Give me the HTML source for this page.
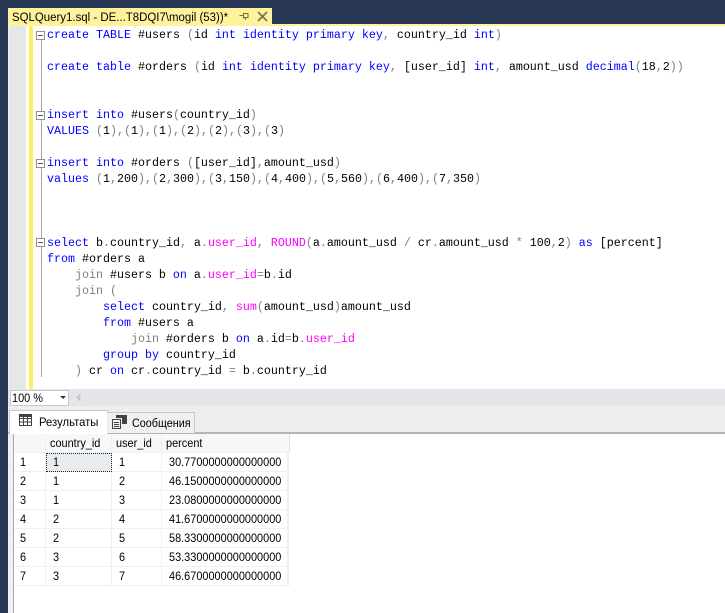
<!DOCTYPE html>
<html><head><meta charset="utf-8">
<style>
html,body{margin:0;padding:0;background:#fff}
#r{position:relative;width:725px;height:613px;overflow:hidden;background:#fff;font-family:"Liberation Sans",sans-serif}
.a{position:absolute}
.s{transform-origin:0 50%;transform:scaleX(.91)}
.l{position:absolute;left:47px;height:16px;line-height:16px;font-family:"Liberation Mono",monospace;font-size:11.67px;white-space:pre;color:#000;margin-top:1px}
.k{color:#0000ff}.g{color:#808080}.p{color:#ff00ff}
.f{position:absolute;left:36px;width:7px;height:7px;border:1px solid #8f8f8f;background:#fff}
.f:after{content:"";position:absolute;left:1px;top:3px;width:5px;height:1px;background:#555}
.c{position:absolute;font-size:12px;line-height:19px;height:19px;color:#000;white-space:pre;margin-top:1px;transform-origin:0 50%;transform:scaleX(.91)}
.hl{position:absolute;background:#f0f0f0}
</style></head><body><div id="r">
<div class="a" style="left:0;top:0;width:725px;height:24px;background:#293955"></div>
<div class="a" style="left:0;top:0;width:8px;height:613px;background:#293955"></div>
<div class="a" style="left:8px;top:8px;width:264px;height:17px;background:#fff29d"></div>
<div class="a" style="left:8px;top:24px;width:717px;height:2px;background:#fff29d"></div>
<div class="a" style="left:12px;top:8px;font-size:12.3px;line-height:18px;color:#000;white-space:pre;transform-origin:0 50%;transform:scaleX(.93)">SQLQuery1.sql - DE...T8DQI7\mogil (53))*</div>
<svg class="a" style="left:238px;top:10px" width="30" height="12" viewBox="0 0 30 12"><path d="M1.5 5.5H5M5.500 3V8.500M5.500 3.500H10V7.500H5.500M7.500 7.500V10" fill="none" stroke="#7a6a3a" stroke-width="1"/><path d="M20 2L29 11M29 2L20 11" stroke="#7d7358" stroke-width="1.800" fill="none"/></svg>

<div class="a" style="left:8px;top:26px;width:1px;height:363px;background:#f0f0f0"></div>
<div class="a" style="left:9px;top:26px;width:17px;height:363px;background:#e6e7e8"></div>
<div class="a" style="left:29px;top:26px;width:4px;height:363px;background:#ffee62"></div>
<div class="a" style="left:41px;top:36px;width:1px;height:341px;background:#a5a5a5"></div>
<div class="f" style="top:31px"></div>
<div class="f" style="top:111px"></div>
<div class="f" style="top:159px"></div>
<div class="f" style="top:238px"></div>

<div class="l" style="top:26px"><span class="k">create</span> <span class="k">TABLE</span> #users <span class="g">(</span>id <span class="k">int</span> <span class="k">identity</span> <span class="k">primary</span> <span class="k">key</span><span class="g">,</span> country_id <span class="k">int</span><span class="g">)</span></div>
<div class="l" style="top:58px"><span class="k">create</span> <span class="k">table</span> #orders <span class="g">(</span>id <span class="k">int</span> <span class="k">identity</span> <span class="k">primary</span> <span class="k">key</span><span class="g">,</span> [user_id] <span class="k">int</span><span class="g">,</span> amount_usd <span class="k">decimal</span><span class="g">(</span>18<span class="g">,</span>2<span class="g">))</span></div>
<div class="l" style="top:106px"><span class="k">insert</span> <span class="k">into</span> #users<span class="g">(</span>country_id<span class="g">)</span></div>
<div class="l" style="top:122px"><span class="k">VALUES</span> <span class="g">(</span>1<span class="g">),(</span>1<span class="g">),(</span>1<span class="g">),(</span>2<span class="g">),(</span>2<span class="g">),(</span>3<span class="g">),(</span>3<span class="g">)</span></div>
<div class="l" style="top:154px"><span class="k">insert</span> <span class="k">into</span> #orders <span class="g">(</span>[user_id]<span class="g">,</span>amount_usd<span class="g">)</span></div>
<div class="l" style="top:170px"><span class="k">values</span> <span class="g">(</span>1<span class="g">,</span>200<span class="g">),(</span>2<span class="g">,</span>300<span class="g">),(</span>3<span class="g">,</span>150<span class="g">),(</span>4<span class="g">,</span>400<span class="g">),(</span>5<span class="g">,</span>560<span class="g">),(</span>6<span class="g">,</span>400<span class="g">),(</span>7<span class="g">,</span>350<span class="g">)</span></div>
<div class="l" style="top:234px"><span class="k">select</span> b<span class="g">.</span>country_id<span class="g">,</span> a<span class="g">.</span><span class="p">user_id</span><span class="g">,</span> <span class="p">ROUND</span><span class="g">(</span>a<span class="g">.</span>amount_usd <span class="g">/</span> cr<span class="g">.</span>amount_usd <span class="g">*</span> 100<span class="g">,</span>2<span class="g">)</span> <span class="k">as</span> [percent]</div>
<div class="l" style="top:250px"><span class="k">from</span> #orders a</div>
<div class="l" style="top:266px">    <span class="g">join</span> #users b <span class="k">on</span> a<span class="g">.</span><span class="p">user_id</span><span class="g">=</span>b<span class="g">.</span>id</div>
<div class="l" style="top:282px">    <span class="g">join</span> <span class="g">(</span></div>
<div class="l" style="top:298px">        <span class="k">select</span> country_id<span class="g">,</span> <span class="p">sum</span><span class="g">(</span>amount_usd<span class="g">)</span>amount_usd</div>
<div class="l" style="top:314px">        <span class="k">from</span> #users a</div>
<div class="l" style="top:330px">            <span class="g">join</span> #orders b <span class="k">on</span> a<span class="g">.</span>id<span class="g">=</span>b<span class="g">.</span><span class="p">user_id</span></div>
<div class="l" style="top:346px">        <span class="k">group</span> <span class="k">by</span> country_id</div>
<div class="l" style="top:362px">    <span class="g">)</span> cr <span class="k">on</span> cr<span class="g">.</span>country_id <span class="g">=</span> b<span class="g">.</span>country_id</div>

<div class="a" style="left:8px;top:389px;width:717px;height:17px;background:#e6e6ea"></div>
<div class="a" style="left:10px;top:390px;width:57px;height:14px;background:#fff;border:1px solid #c4c8d0"></div>
<div class="a s" style="left:12px;top:390px;font-size:12px;line-height:16px;color:#000;white-space:pre">100 %</div>
<svg class="a" style="left:59px;top:395px" width="8" height="5"><path d="M1 1H7L4 4Z" fill="#333"/></svg>
<svg class="a" style="left:75px;top:392px" width="6" height="11"><path d="M5.500 1V10L1 5.500Z" fill="#c8c8cc"/></svg>

<div class="a" style="left:8px;top:406px;width:717px;height:27px;background:#eeeeee"></div>
<div class="a" style="left:8px;top:432px;width:717px;height:2px;background:#b5b5b5"></div>
<div class="a" style="left:9px;top:410px;width:97px;height:23px;background:#fff;border:1px solid #c8c8c8;border-bottom:none"></div>
<div class="a" style="left:107px;top:412px;width:87px;height:20px;background:#f0f0f0;border:1px solid #c8c8c8;border-bottom:none;border-left:none"></div>
<svg class="a" style="left:19px;top:414px" width="14" height="13"><path d="M.5 .5H12.500V11.500H.5ZM.5 4.500H12.500M.5 8H12.500M4.500 .5V11.500M8.500 .5V11.500" fill="none" stroke="#424242"/><path d="M0 0H13V3H0Z" fill="#424242"/></svg>
<div class="a" style="left:39px;top:413px;font-size:12px;line-height:18px;white-space:pre;transform-origin:0 50%;transform:scaleX(.94)">Результаты</div>
<svg class="a" style="left:112px;top:415px" width="16" height="15"><path d="M.5 4.500H8.500V13.500H.5ZM2 7.500H7M2 9.500H7M2 11.500H7" fill="none" stroke="#424242"/><path d="M4 0H15V9H10V3H4Z" fill="#424242"/></svg>
<div class="a" style="left:132px;top:414px;font-size:12px;line-height:18px;white-space:pre;transform-origin:0 50%;transform:scaleX(.9)">Сообщения</div>

<div class="a" style="left:8px;top:434px;width:5px;height:179px;background:#f0f0f0"></div>
<div class="a" style="left:13px;top:434px;width:1px;height:179px;background:#a8a8a8"></div>
<div class="a" style="left:14px;top:434px;width:276px;height:19px;background:#f7f7f7"></div>
<div class="a" style="left:289px;top:434px;width:1px;height:19px;background:#e4e4e4"></div>

<div class="hl" style="left:45px;top:434px;width:1px;height:152px"></div>
<div class="hl" style="left:111px;top:434px;width:1px;height:152px"></div>
<div class="hl" style="left:161px;top:434px;width:1px;height:152px"></div>
<div class="hl" style="left:287px;top:453px;width:2px;height:133px"></div>
<div class="hl" style="left:14px;top:452px;width:275px;height:1px"></div>
<div class="hl" style="left:14px;top:471px;width:275px;height:1px"></div>
<div class="hl" style="left:14px;top:490px;width:275px;height:1px"></div>
<div class="hl" style="left:14px;top:509px;width:275px;height:1px"></div>
<div class="hl" style="left:14px;top:528px;width:275px;height:1px"></div>
<div class="hl" style="left:14px;top:547px;width:275px;height:1px"></div>
<div class="hl" style="left:14px;top:566px;width:275px;height:1px"></div>
<div class="hl" style="left:14px;top:585px;width:275px;height:1px"></div>
<div class="a" style="left:46px;top:453px;width:64px;height:17px;background:#e8ecef;border:1px dotted #222"></div>

<div class="c" style="left:50px;top:433px">country_id</div><div class="c" style="left:116px;top:433px">user_id</div><div class="c" style="left:166px;top:433px">percent</div>

<div class="c" style="left:20px;top:452px">1</div><div class="c" style="left:53px;top:452px">1</div><div class="c" style="left:119px;top:452px">1</div><div class="c" style="left:169px;top:452px">30.7700000000000000</div>
<div class="c" style="left:20px;top:471px">2</div><div class="c" style="left:53px;top:471px">1</div><div class="c" style="left:119px;top:471px">2</div><div class="c" style="left:169px;top:471px">46.1500000000000000</div>
<div class="c" style="left:20px;top:490px">3</div><div class="c" style="left:53px;top:490px">1</div><div class="c" style="left:119px;top:490px">3</div><div class="c" style="left:169px;top:490px">23.0800000000000000</div>
<div class="c" style="left:20px;top:509px">4</div><div class="c" style="left:53px;top:509px">2</div><div class="c" style="left:119px;top:509px">4</div><div class="c" style="left:169px;top:509px">41.6700000000000000</div>
<div class="c" style="left:20px;top:528px">5</div><div class="c" style="left:53px;top:528px">2</div><div class="c" style="left:119px;top:528px">5</div><div class="c" style="left:169px;top:528px">58.3300000000000000</div>
<div class="c" style="left:20px;top:547px">6</div><div class="c" style="left:53px;top:547px">3</div><div class="c" style="left:119px;top:547px">6</div><div class="c" style="left:169px;top:547px">53.3300000000000000</div>
<div class="c" style="left:20px;top:566px">7</div><div class="c" style="left:53px;top:566px">3</div><div class="c" style="left:119px;top:566px">7</div><div class="c" style="left:169px;top:566px">46.6700000000000000</div>
</div></body></html>
